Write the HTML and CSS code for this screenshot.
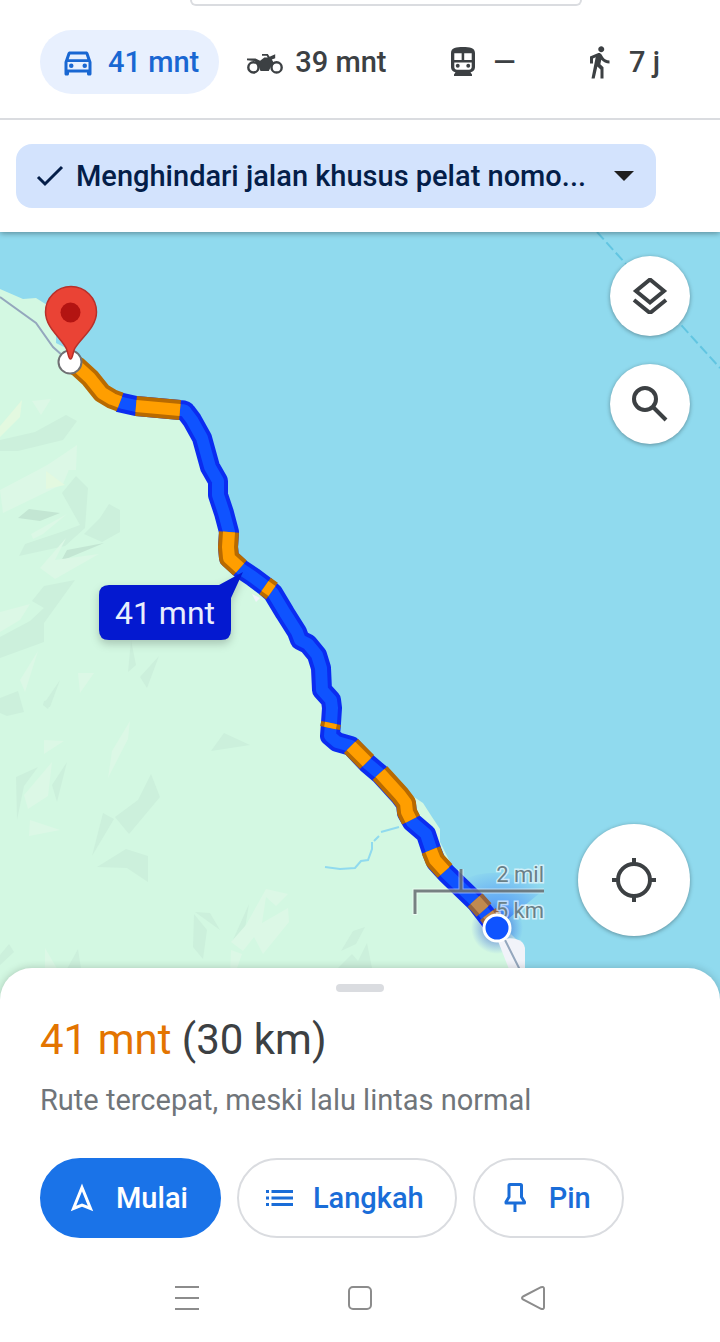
FILE: index.html
```html
<!DOCTYPE html>
<html lang="id">
<head>
  <meta charset="UTF-8">
  <meta name="viewport" content="width=device-width, initial-scale=1">
  <title>Rute</title>
  <link rel="stylesheet" href="styles.css">
</head>
<body>
  <header class="header">
    <div class="search-edge"></div>
    <nav class="modes">
      <button class="mode active">
        <svg class="icon" viewBox="0 0 24 24"><path d="M18.92 6.01C18.72 5.42 18.16 5 17.5 5h-11c-.66 0-1.21.42-1.42 1.01L3 12v8c0 .55.45 1 1 1h1c.55 0 1-.45 1-1v-1h12v1c0 .55.45 1 1 1h1c.55 0 1-.45 1-1v-8l-2.08-5.99zM6.85 7h10.29l1.08 3.11H5.77L6.85 7zM19 17H5v-5h14v5z"/><circle cx="7.5" cy="14.5" r="1.5"/><circle cx="16.5" cy="14.5" r="1.5"/></svg>
        41 mnt
      </button>
      <button class="mode">
        <svg class="icon" viewBox="0 0 36 36">
          <g fill="none" stroke="currentColor" stroke-width="2.4"><circle cx="6.4" cy="23.4" r="5.1"/><circle cx="29.6" cy="23.4" r="5.1"/></g>
          <path d="M0 14.6h8.5l4.6 2.2 4.2-3.2h3.4l-1-1.8H15V10h5.8l1.8 2.8 5.6-2.5v4l-3.4 1.2 2.6 4.2-3.2 2.2-2.4 5h-8.3l-2-5.4L7.5 17 0 16.2z"/>
        </svg>
        39 mnt
      </button>
      <button class="mode">
        <svg class="icon" viewBox="0 0 24 24">
          <path fill-rule="evenodd" d="M12 2c-4.4 0-8 .5-8 4v9.5C4 17.4 5.5 18.600 7 18.800L6 20.300v1h12v-1l-1-1.500c1.500-.2 3-1.400 3-3.300V6c0-3.500-3.600-4-8-4zM6.200 6.200h4.900v4.400H6.200zM12.800 6.200h5v4.400h-5zM6.200 12.300h11.600v3c0 1-.8 1.800-1.800 1.800H8c-1 0-1.800-.8-1.800-1.800z"/>
          <circle cx="8.5" cy="14.5" r="1.300"/><circle cx="15.5" cy="14.5" r="1.300"/>
        </svg>
        —
      </button>
      <button class="mode">
        <svg class="icon" viewBox="0 0 24 24"><path d="M13.5 5.500c1.100 0 2-.9 2-2s-.9-2-2-2-2 .9-2 2 .9 2 2 2zM9.800 8.900L7 23h2.100l1.800-8 2.100 2v6h2v-7.500l-2.100-2 .6-3C14.800 12 16.800 13 19 13v-2c-1.900 0-3.500-1-4.300-2.400l-1-1.600c-.4-.6-1-1-1.700-1-.3 0-.5.1-.8.1L6 8.300V13h2V9.600l1.800-.7"/></svg>
        7 j
      </button>
    </nav>
    <div class="filters">
      <div class="chip">
        <svg class="chip-check" viewBox="0 0 28 28"><path d="M2 15l7 7L26 5" fill="none" stroke="currentColor" stroke-width="3"/></svg>
        <select class="chip-select" aria-label="Opsi rute">
          <option>Menghindari jalan khusus pelat nomo...</option>
        </select>
        <svg class="chip-arrow" viewBox="0 0 20 10"><path d="M0 0h20L10 10z"/></svg>
      </div>
    </div>
  </header>

  <main class="map">
    <svg class="map-canvas" viewBox="0 232 720 768" preserveAspectRatio="xMidYMin slice">
      <defs>
        <radialGradient id="beam" cx="497" cy="928" r="60" gradientUnits="userSpaceOnUse">
          <stop offset="0" stop-color="#1a5cff" stop-opacity=".7"/>
          <stop offset="1" stop-color="#1a5cff" stop-opacity="0"/>
        </radialGradient>
        <radialGradient id="glow" cx="497" cy="928" r="26" gradientUnits="userSpaceOnUse">
          <stop offset=".4" stop-color="#1a3cc0" stop-opacity=".45"/>
          <stop offset="1" stop-color="#1a5cff" stop-opacity="0"/>
        </radialGradient>
        <filter id="shadow" x="-20%" y="-20%" width="140%" height="160%" color-interpolation-filters="sRGB">
          <feDropShadow dx="0" dy="4" stdDeviation="4" flood-color="#000" flood-opacity=".2"/>
        </filter>
      </defs>

      <rect class="sea" x="0" y="232" width="720" height="768"/>
      <path class="land" d="M0 289L23 299 36 298 47 305 56 334 57 343 70 346 92 370 118 395 180 405 202 430 222 480 230 535 241 567 275 588 303 640 326 670 336 740 358 748 414 797 423 803 432 817 440 829 440 842 452 866 497 920 515 938 525 948 525 1000H0z"/>
      <path class="water" d="M56 335l5 5 5 8-10-5z"/>

      <!-- relief -->
      <g class="shade">
        <path d="M0 440l35-8 31-17 11 6-14 19-45 11H0z"/>
        <path d="M62 493l14-17 12 12-3 40-20 18-46 10 6-12 36-12 19-7z"/>
        <path d="M100 518l9-14 11 6v22l-18 10-18-8z"/>
        <path d="M0 637l30-16 14-13-12-7 12-15 31-6-31 43v19L0 658z"/>
        <path d="M131 640l5 25-8 7zM159 656l-12 32-7-11zM60 680l-10 27-7-2z"/>
        <path d="M0 698l18-7 6 21-17 4-7-3zM44 701l8-2-4 10-5-4z"/>
        <path d="M16 777l22-10-14 19-7 34zM67 762L57 802l-5-17z"/>
        <path d="M211 751l13-18 26 12z"/>
        <path d="M115 817l23-17 13-26 9 23-31 37zM103 813l11 6-22 37z"/>
        <path d="M97 867l29-18 22 7v26l-21-14z"/>
        <path d="M194 914l13 16-4 29-10-12zM195 912l15 1 10 17zM249 904l-4 24-13 14z"/>
        <path d="M0 955l9-11 5 8-14 13zM78 949l3 20H67z"/>
        <path d="M341 951l12-20 12-4-9 17zM338 968l14-14 6 7 9-18 5 25z"/>
      </g>
      <g class="shade-dark">
        <path d="M18 518l11-9 31 4-20 8zM61 561l6-11 37-7z"/>
      </g>
      <g class="lit">
        <path d="M0 490l38-20 37-20-7 22-5 12-60 29z"/>
        <path d="M32 401l19-2-10 16zM77 445l-1 25-36 0z"/>
        <path d="M31 534l36-20-24 20-10 5zM40 568l26-30-11 22 44-6-44 25z"/>
        <path d="M0 612l30-8-10 16-20 12zM20 680l18-29-13 41zM78 673l16 0-14 20z"/>
        <path d="M44 740l20 1-20 13zM130 721l-2 18-20 39 4-27z"/>
        <path d="M24 795l28-33-4 34-20 13zM30 820l30 10-31 6z"/>
        <path d="M231 942l15-17 20-36 22 5-12 12-10-9-4 26 26-15 1 14-26 32-9-17-11 14zM231 950l11 4-7 20h-5zM45 948l14 24H45z"/>
      </g>
      <path class="lit-warm" d="M22 400l-2 17-20 20v-11zM46 471l19 14-19 4z"/>

      <path class="creek" d="M325 867l15 2 15-1 6-7 7-1 4-11v-7M374 841l5-5M381 832l18-5"/>
      <path class="town" d="M472 912l25 28-8-2zM252 594l8 4-4 4z"/>
      <path class="ferry" d="M597 232l123 136"/>

      <path d="M497 928L462 880Q500 862 546 888z" fill="url(#beam)"/>
      <circle cx="497" cy="928" r="26" fill="url(#glow)"/>
      <path class="town" d="M498 941q14-6 24 1 3 3 3 8v50h-4z"/>
      <path class="road" d="M0 297l36 26 17 24 10 9M505 940l28 56"/>

      <!-- route, slow stretches are drawn over the full line -->
      <g class="route fast">
        <path class="casing" d="M118 402l18 4 11 1 33 3q5 0 6 2l6 8 10 18 8 29 8 14v14l6 18 5 19-1 15 1 11 12 11 12 8 12 9 8 7 12 20 12 19 3 8 8 4 9 11 4 13 1 22 9 10 1 8-1 15-1 13 7 6 14 4 16 17 13 11 20 22 6 8 1 9 5 9 14 12 6 18 4 10 10 11 30 29 20 26"/>
        <path class="core" d="M118 402l18 4 11 1 33 3q5 0 6 2l6 8 10 18 8 29 8 14v14l6 18 5 19-1 15 1 11 12 11 12 8 12 9 8 7 12 20 12 19 3 8 8 4 9 11 4 13 1 22 9 10 1 8-1 15-1 13 7 6 14 4 16 17 13 11 20 22 6 8 1 9 5 9 14 12 6 18 4 10 10 11 30 29 20 26"/>
      </g>
      <g class="route slow">
        <path class="casing" d="M70 362l8 5 12 11 12 15 10 6 8 3"/>
        <path class="core" d="M70 362l8 5 12 11 12 15 10 6 8 3"/>
        <path class="casing" d="M136 406l11 1 33 3"/>
        <path class="core" d="M136 406l11 1 33 3"/>
        <path class="casing" d="M229 532l-1 15 1 11 11 10"/>
        <path class="core" d="M229 532l-1 15 1 11 11 10"/>
        <path class="casing" d="M265 586l7 5"/>
        <path class="core" d="M265 586l7 5"/>
        <path class="casing" d="M331 723l-1 5"/>
        <path class="core" d="M331 723l-1 5"/>
        <path class="casing" d="M351 746l16 16"/>
        <path class="core" d="M351 746l16 16"/>
        <path class="casing" d="M380 773l20 22 6 8 1 9 4 8"/>
        <path class="core" d="M380 773l20 22 6 8 1 9 4 8"/>
        <path class="casing" d="M431 850l4 10 10 11"/>
        <path class="core" d="M431 850l4 10 10 11"/>
      </g>
      <g class="route slow dim">
        <path class="casing" d="M475 900l9 10M488 914l9 12"/>
        <path class="core" d="M475 900l9 10M488 914l9 12"/>
      </g>

      <!-- scale bar -->
      <path class="scale-halo" d="M415 915v-24h129M461 869v22"/>
      <path class="scale-line" d="M415 914v-23h129M461 869v22"/>
      <text class="scale-text" x="544" y="882">2 mil</text>
      <text class="scale-text" x="544" y="918">5 km</text>

      <!-- current position -->
      <circle cx="497" cy="928" r="13" fill="#0f53ff" stroke="#fff" stroke-width="3"/>

      <!-- route label -->
      <path class="bubble" filter="url(#shadow)" d="M109 585h110l24-13-12 26v32q0 10-10 10H109q-10 0-10-10v-35q0-10 10-10z"/>
      <text class="bubble-text" x="165" y="624">41 mnt</text>

      <!-- destination -->
      <circle cx="70" cy="362" r="11.5" fill="#fff" stroke="#6f7073" stroke-width="2"/>
      <path d="M70.5 359c-2 0-2-5-4-10-4-10-21-21-21-37a25.500 25.500 0 0 1 51 0c0 16-17 27-22 37-2 5-2 10-4 10z" fill="#ea4335" stroke="#b8302a" stroke-width="1.5"/>
      <circle cx="70.5" cy="312.5" r="10" fill="#b31412"/>
    </svg>

    <div class="map-controls">
      <button class="fab" aria-label="Lapisan">
        <svg class="icon" viewBox="0 0 36 36" fill="none" stroke="currentColor" stroke-width="4"><path d="M18 1.500l14 11.500L18 24.500 4 13z"/><path d="M2 22l16 13 16-13"/></svg>
      </button>
      <button class="fab" aria-label="Telusuri">
        <svg class="icon" viewBox="0 0 36 36" fill="none" stroke="currentColor" stroke-width="4"><circle cx="13" cy="13" r="11"/><path d="M21 21l13 13"/></svg>
      </button>
      <button class="fab large" aria-label="Lokasi saya">
        <svg class="icon" viewBox="0 0 44 44" fill="none" stroke="currentColor" stroke-width="4"><circle cx="22" cy="22" r="16"/><path d="M22 0v6M22 38v6M0 22h6M38 22h6"/></svg>
      </button>
    </div>
  </main>

  <section class="sheet">
    <div class="handle"></div>
    <h1 class="summary"><span class="duration">41 mnt</span> (30 km)</h1>
    <p class="note">Rute tercepat, meski lalu lintas normal</p>
    <div class="actions">
      <button class="action primary">
        <svg class="icon" viewBox="0 0 36 36" fill="none" stroke="currentColor" stroke-width="3"><path d="M18 7.500L26.500 28.500 18 25 9.500 28.500z"/></svg>
        Mulai
      </button>
      <button class="action">
        <svg class="icon" viewBox="0 0 36 36"><path d="M5 10h3v3H5zM5 16.500h3v3H5zM5 23h3v3H5zM10.500 10H32v3H10.500zM10.500 16.500H32v3H10.500zM10.500 23H32v3H10.500z"/></svg>
        Langkah
      </button>
      <button class="action">
        <svg class="icon" viewBox="0 0 36 36" fill="none" stroke="currentColor" stroke-width="3" stroke-linejoin="round"><path d="M13 4.500h10.500q1 0 1 1V17l3 5v1H9v-1l3-5V5.500q0-1 1-1zM18 23v9"/></svg>
        Pin
      </button>
    </div>
    <nav class="system-nav">
      <button aria-label="Terbaru"><svg viewBox="0 0 32 32"><path d="M4 5h24M4 16h24M4 27h24"/></svg></button>
      <button aria-label="Beranda"><svg viewBox="0 0 32 32"><rect x="5" y="5" width="22" height="22" rx="4"/></svg></button>
      <button aria-label="Kembali"><svg viewBox="0 0 32 32"><path d="M6 14.500L24 5.200q3-1 3 1.500v18.600q0 2.500-3 1.500L6 17.500q-2-1.500 0-3z"/></svg></button>
    </nav>
  </section>
</body>
</html>
```

FILE: styles.css
```css
* {
  box-sizing: border-box;
}
body {
  margin: 0;
  min-height: 100vh;
  display: flex;
  flex-direction: column;
  font-family: Roboto, "Liberation Sans", sans-serif;
  color: #3c4043;
  background: #fff;
}
button {
  margin: 0;
  padding: 0;
  border: none;
  background: none;
  font: inherit;
  color: inherit;
  cursor: pointer;
}
svg {
  display: block;
  flex: none;
}
.icon {
  width: 36px;
  height: 36px;
  fill: currentColor;
}
.icon[fill="none"] {
  fill: none;
}

/* header */
.header {
  position: relative;
  z-index: 1;
  background: #fff;
  box-shadow: 0 1px 6px rgba(0, 0, 0, 0.4);
}
.search-edge {
  height: 6px;
  margin: 0 138px 0 190px;
  border: 2px solid #dadce0;
  border-top: none;
  border-radius: 0 0 16px 16px;
}
.modes {
  display: flex;
  gap: 8px;
  padding: 24px 24px 24px 40px;
  border-bottom: 2px solid #dadce0;
}
.mode {
  display: flex;
  align-items: center;
  justify-content: center;
  gap: 12px;
  min-width: 132px;
  height: 64px;
  padding: 0 20px;
  border-radius: 32px;
  font-size: 29px;
  font-weight: 500;
  white-space: nowrap;
}
.mode.active {
  background: #e8f0fe;
  color: #1967d2;
}
.filters {
  padding: 24px 64px 24px 16px;
}
.chip {
  display: flex;
  align-items: center;
  height: 64px;
  padding: 0 22px 0 20px;
  border-radius: 16px;
  background: #d3e3fd;
  color: #041e49;
}
.chip-check {
  width: 28px;
  height: 28px;
}
.chip-select {
  flex: 1;
  min-width: 0;
  height: 64px;
  padding: 0 12px;
  border: none;
  background: none;
  appearance: none;
  font: inherit;
  font-size: 29px;
  font-weight: 500;
  color: inherit;
}
.chip-arrow {
  width: 20px;
  height: 10px;
  fill: #1f1f1f;
}

/* map */
.map {
  position: relative;
  flex: 1;
  min-height: 480px;
  display: flex;
  overflow: hidden;
}
.map-canvas {
  position: absolute;
  width: 100%;
  height: 100%;
}
.sea,
.water {
  fill: #90daee;
}
.land {
  fill: #d3f8e2;
}
.shade {
  fill: #ccf0dc;
}
.shade-dark {
  fill: #c3e6d3;
}
.lit {
  fill: #dcf8e6;
}
.lit-warm {
  fill: #e3f9e0;
}
.town {
  fill: #f1f3f9;
}
.creek {
  fill: none;
  stroke: #90daee;
  stroke-width: 2;
}
.road {
  fill: none;
  stroke: #94a7bd;
  stroke-width: 2;
}
.ferry {
  fill: none;
  stroke: #62c5e1;
  stroke-width: 2;
  stroke-dasharray: 10 4;
}
.route {
  fill: none;
  stroke-linejoin: round;
}
.casing {
  stroke-width: 20;
}
.core {
  stroke-width: 12;
}
.fast .casing {
  stroke: #0b2cf0;
}
.fast .core {
  stroke: #0f53ff;
}
.slow .casing {
  stroke: #b86a00;
}
.slow .core {
  stroke: #ff9e00;
}
.dim .casing {
  stroke: #94633f;
}
.dim .core {
  stroke: #c08a50;
}
.scale-halo {
  fill: none;
  stroke: #fff;
  stroke-opacity: 0.5;
  stroke-width: 5;
}
.scale-line {
  fill: none;
  stroke: #50585c;
  stroke-opacity: 0.75;
  stroke-width: 3;
}
.scale-text {
  font-size: 22px;
  text-anchor: end;
  fill: #6a7f87;
  stroke: rgba(255, 255, 255, 0.6);
  stroke-width: 3;
  paint-order: stroke;
}
.bubble {
  fill: #0419d0;
}
.bubble-text {
  font-size: 32px;
  text-anchor: middle;
  fill: #e8eefc;
}
.map-controls {
  position: relative;
  flex: 1;
  display: flex;
  flex-direction: column;
  align-items: flex-end;
  gap: 28px;
  padding: 24px 30px 64px;
}
.fab {
  display: flex;
  align-items: center;
  justify-content: center;
  width: 80px;
  height: 80px;
  border-radius: 50%;
  background: #fff;
  box-shadow: 0 1px 4px rgba(0, 0, 0, 0.35);
}
.fab.large {
  width: 112px;
  height: 112px;
  margin-top: auto;
}
.fab.large .icon {
  width: 44px;
  height: 44px;
}

/* bottom sheet */
.sheet {
  position: relative;
  margin-top: -32px;
  padding: 16px 40px 28px;
  border-radius: 32px 32px 0 0;
  background: #fff;
  box-shadow: 0 0 8px rgba(0, 0, 0, 0.2);
}
.handle {
  width: 48px;
  height: 8px;
  margin: 0 auto 20px;
  border-radius: 4px;
  background: #dadce0;
}
.summary {
  margin: 0 0 16px;
  font-size: 42px;
  line-height: 56px;
  font-weight: 400;
}
.duration {
  color: #e37400;
}
.note {
  margin: 0 0 42px;
  font-size: 29px;
  line-height: 32px;
  color: #70757a;
}
.actions {
  display: flex;
  flex-wrap: wrap;
  gap: 16px;
}
.action {
  display: flex;
  align-items: center;
  gap: 16px;
  height: 80px;
  padding: 0 31px 0 22px;
  border: 2px solid #dadce0;
  border-radius: 40px;
  font-size: 29px;
  font-weight: 500;
  color: #1a6dd8;
}
.action.primary {
  border-color: #1a73e8;
  background: #1a73e8;
  color: #fff;
}
.system-nav {
  display: grid;
  grid-template-columns: repeat(3, 1fr);
  justify-items: center;
  padding: 44px 60px 0;
}
.system-nav svg {
  width: 32px;
  height: 32px;
  fill: none;
  stroke: #8c8c8c;
  stroke-width: 2;
}
```
